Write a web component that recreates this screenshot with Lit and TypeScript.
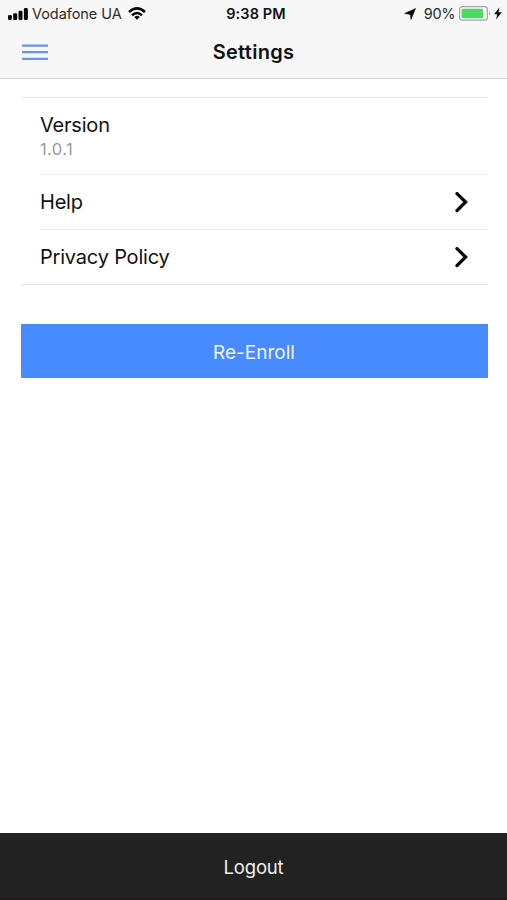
import { LitElement, html, css } from "lit";
import { customElement } from "lit/decorators.js";

const chevron = html`<svg class="chevron" width="13" height="21" viewBox="0 0 13 21">
  <path d="M2 1.6 L10.6 10 L2 18.6" fill="none" stroke="#080808" stroke-width="3.3" stroke-linecap="round" />
</svg>`;

@customElement("app-root")
export class AppRoot extends LitElement {
  static styles = css`
    :host {
      display: flex;
      flex-direction: column;
      height: 900px;
      background: #fff;
      color: #111;
      font-family: Inter, "Liberation Sans", sans-serif;
      font-size: 20px;
    }
    svg { display: block; flex: none; }
    header {
      box-sizing: border-box;
      height: 79px;
      background: #f7f7f7;
      border-bottom: 1px solid #d6d6d6;
    }
    .status, .bar {
      display: grid;
      grid-template-columns: 1fr auto 1fr;
      align-items: center;
    }
    .status { height: 27px; font-size: 14.5px; padding: 0 5.5px 0 8px; }
    .left, .right { display: flex; align-items: center; }
    .carrier { margin: 0 6px 0 4px; letter-spacing: -0.05px; color: #2c2c2c; }
    .clock { font-weight: 600; font-size: 14.5px; letter-spacing: 0.1px; margin-right: -2.5px; }
    .right { justify-content: flex-end; }
    .percent { margin: 0 4px 0 8px; letter-spacing: -0.4px; color: #2c2c2c; }
    .bolt { margin-left: 2.5px; }
    .bar { height: 50px; padding: 0 22px; }
    .menu { width: 26px; background: none; border: 0; padding: 0; }
    h1 { margin: 0; font-size: 20px; font-weight: 600; letter-spacing: 0.3px; color: #111; }
    main { flex: 1; padding: 18px 19.5px 0 20.5px; }
    .list {
      border-top: 1px solid #e6e6e6;
      border-bottom: 1px solid #e6e6e6;
      padding-left: 19.5px;
    }
    .row {
      box-sizing: border-box;
      height: 55px;
      display: flex;
      align-items: center;
      justify-content: space-between;
      padding-right: 20px;
      border-bottom: 1px solid #ececec;
    }
    .row:last-child { border-bottom: 0; height: 54px; }
    .tall { height: 77px; padding-top: 2px; }
    .label { line-height: 24px; letter-spacing: -0.2px; }
    .value { font-size: 16.5px; line-height: 24px; color: #989898; letter-spacing: 0.4px; }
    .enroll, .logout {
      display: flex;
      align-items: center;
      justify-content: center;
      font-family: inherit;
      border: 0;
      color: #eef4ff;
    }
    .enroll {
      width: 100%;
      height: 54px;
      margin-top: 39px;
      background: #488aff;
      font-size: 19px;
      padding-top: 3px;
    }
    .logout {
      height: 67px;
      box-sizing: border-box;
      background: #222;
      color: #f0f0f0;
      font-size: 18.5px;
      letter-spacing: -0.2px;
      padding-top: 2px;
      border-bottom: 1px solid #1d171a;
    }
  `;

  render() {
    return html`
      <header>
        <div class="status">
          <div class="left">
            <svg width="20" height="12" viewBox="0 0 20 12">
              <g fill="#080808">
                <rect x="0" y="7" width="3.8" height="5" rx="1.2" />
                <rect x="5.2" y="5.2" width="4" height="6.8" rx="1.2" />
                <rect x="10.5" y="2.8" width="4" height="9.2" rx="1.2" />
                <rect x="15.9" y="0" width="4" height="12" rx="1.2" />
              </g>
            </svg>
            <span class="carrier">Vodafone UA</span>
            <svg width="18" height="13" viewBox="0 0 18 13">
              <g fill="none" stroke="#080808" stroke-width="2.5">
                <path d="M1 5 Q9 -2.2 17 5" />
                <path d="M4 8.2 Q9 3.8 14 8.2" />
              </g>
              <path d="M6.2 9.9 Q9 7.7 11.8 9.9 L9 12.7 Z" fill="#080808" />
            </svg>
          </div>
          <span class="clock">9:38 PM</span>
          <div class="right">
            <svg width="12" height="12" viewBox="0 0 12 12">
              <path d="M11.6 .4 L7 11.4 L6.2 6.4 L.6 5.4 Z" fill="#080808" stroke="#080808" stroke-width=".5" />
            </svg>
            <span class="percent">90%</span>
            <svg width="32" height="15" viewBox="0 0 32 15">
              <rect x=".6" y=".6" width="27.8" height="13.6" rx="2.8" fill="#fafafa" stroke="#a5a5a5" stroke-width="1.2" />
              <rect x="2.6" y="2.7" width="21.4" height="9.5" rx="1" fill="#4cd964" />
              <path d="M30 5 Q32 7.4 30 9.8 Z" fill="#a0a0a0" />
            </svg>
            <svg class="bolt" width="8" height="13" viewBox="0 0 8 13">
              <path d="M5.4 .4 L0 7.3 H3.2 L2.1 12.6 L7.8 5.3 H4.5 Z" fill="#080808" />
            </svg>
          </div>
        </div>
        <div class="bar">
          <button class="menu" aria-label="Menu">
            <svg width="26" height="17" viewBox="0 0 26 17">
              <path d="M0 1.6 H26 M0 8.2 H26 M0 14.8 H26" stroke="#6496ee" stroke-width="2.3" />
            </svg>
          </button>
          <h1>Settings</h1>
        </div>
      </header>
      <main>
        <div class="list">
          <div class="row tall">
            <div>
              <div class="label">Version</div>
              <div class="value">1.0.1</div>
            </div>
          </div>
          <div class="row"><span class="label">Help</span>${chevron}</div>
          <div class="row"><span class="label">Privacy Policy</span>${chevron}</div>
        </div>
        <button class="enroll">Re-Enroll</button>
      </main>
      <button class="logout">Logout</button>
    `;
  }
}
